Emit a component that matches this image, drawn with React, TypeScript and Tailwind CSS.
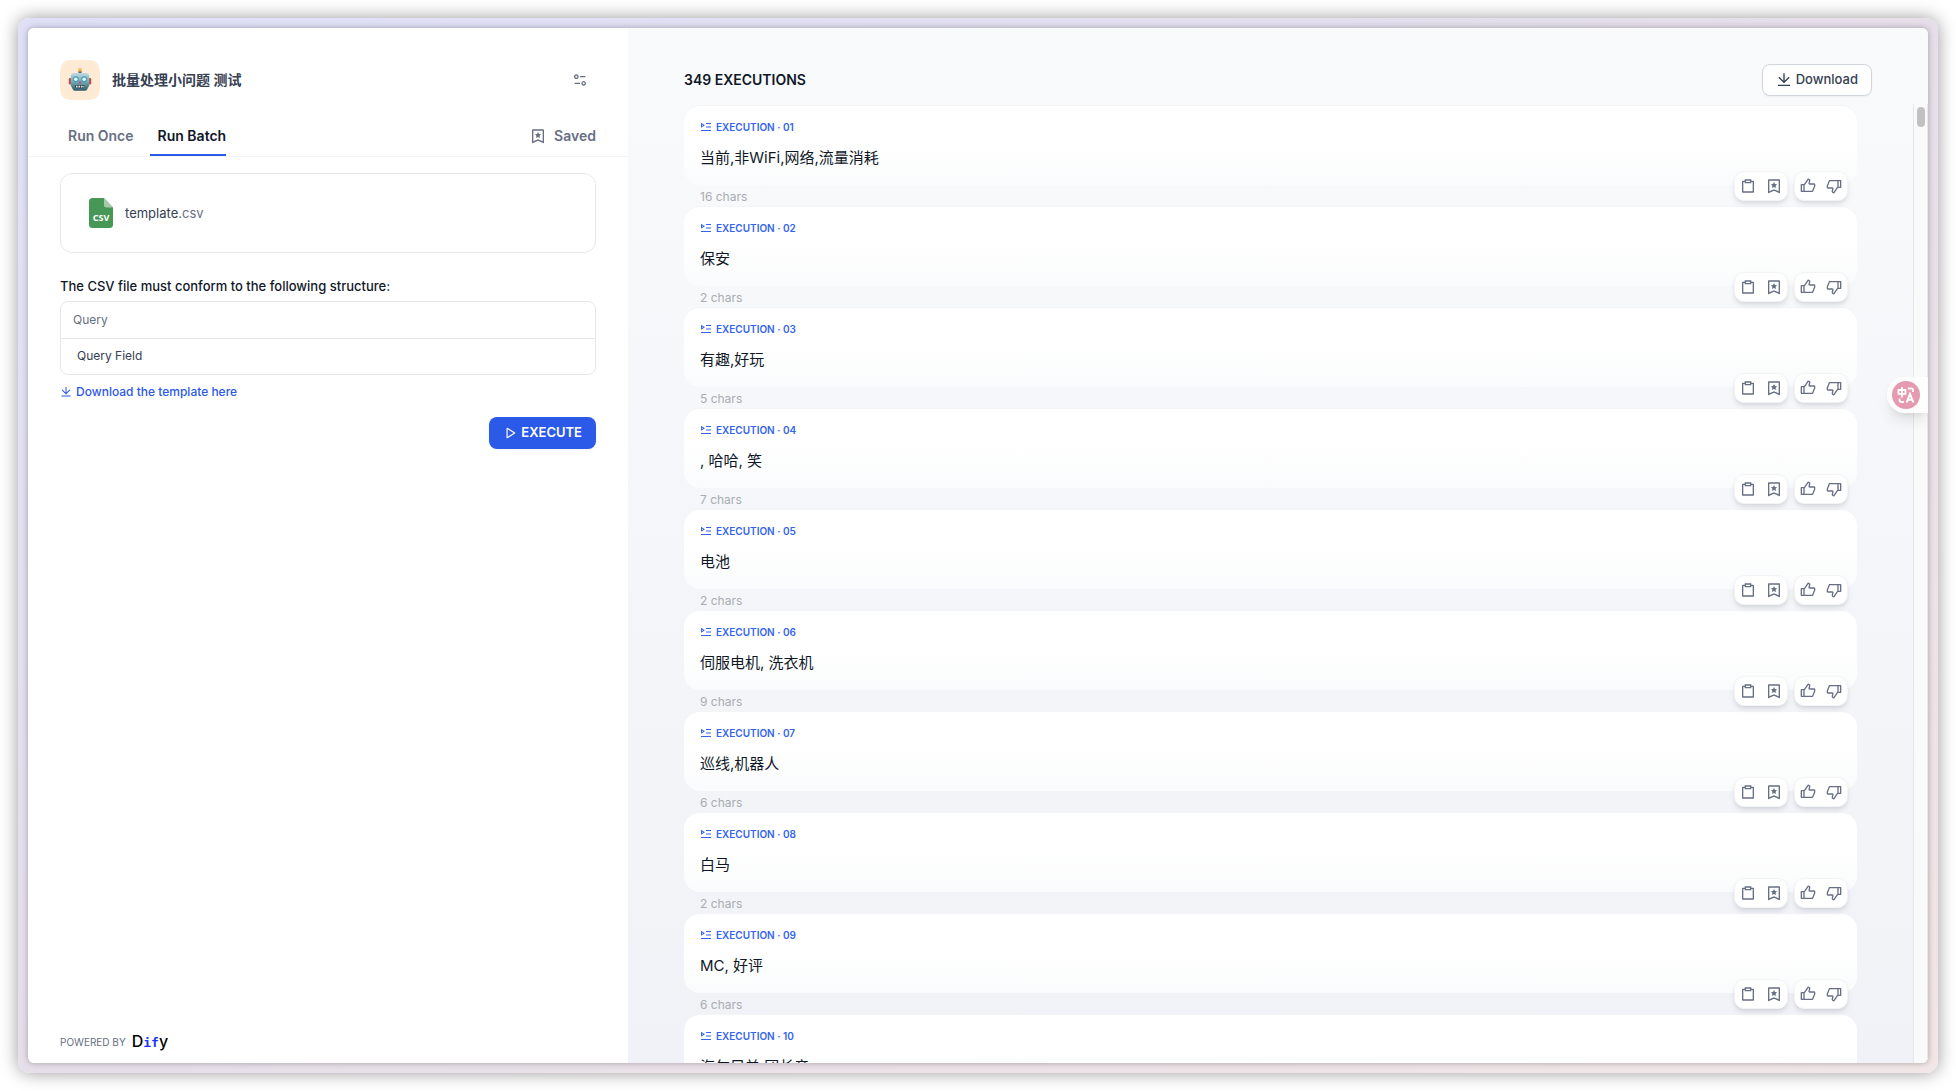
import { useState } from "react";
import {
  RiBookmark3Line,
  RiClipboardLine,
  RiDownloadLine,
  RiEqualizer2Line,
  RiPlayLargeLine,
  RiPlayList2Line,
  RiThumbDownLine,
  RiThumbUpLine,
} from "react-icons/ri";

type Execution = {
  id: string;
  text: string;
  chars: number;
};

const executions: Execution[] = [
  { id: "01", text: "当前,非WiFi,网络,流量消耗", chars: 16 },
  { id: "02", text: "保安", chars: 2 },
  { id: "03", text: "有趣,好玩", chars: 5 },
  { id: "04", text: ", 哈哈, 笑", chars: 7 },
  { id: "05", text: "电池", chars: 2 },
  { id: "06", text: "伺服电机, 洗衣机", chars: 9 },
  { id: "07", text: "巡线,机器人", chars: 6 },
  { id: "08", text: "白马", chars: 2 },
  { id: "09", text: "MC, 好评", chars: 6 },
  { id: "10", text: "海尔兄弟,团长音", chars: 8 },
];

const RobotIcon = () => (
  <svg width="24" height="24" viewBox="0 0 24 24" aria-hidden="true">
    <defs>
      <linearGradient id="robot" x1="0" y1="0" x2="0" y2="1">
        <stop offset="0" stopColor="#c3dbe0" />
        <stop offset="0.5" stopColor="#75a9b8" />
        <stop offset="1" stopColor="#2c5b6b" />
      </linearGradient>
    </defs>
    <rect x="10.4" y="3" width="3.2" height="3.4" fill="#6a5a86" />
    <circle cx="12" cy="2" r="1.8" fill="#f4b443" />
    <rect x="0.8" y="10" width="3" height="6.4" rx="1.2" fill="#c24a45" />
    <rect x="20.2" y="10" width="3" height="6.4" rx="1.2" fill="#c24a45" />
    <path d="M5.5 5h13c1.6 0 2.7 1.2 2.7 2.7v9.8l-2.2 4.2c-.4.7-1 1.1-1.8 1.1H6.8c-.8 0-1.4-.4-1.800-1.1L2.8 17.5V7.7C2.8 6.2 3.9 5 5.500 5z" fill="url(#robot)" />
    <circle cx="7.8" cy="11.2" r="3" fill="#3f9dbd" />
    <circle cx="16.2" cy="11.2" r="3" fill="#3f9dbd" />
    <circle cx="7.8" cy="11.2" r="1.8" fill="#e9fbff" />
    <circle cx="16.2" cy="11.2" r="1.8" fill="#e9fbff" />
    <path d="M12 12.5l1.6 2.8h-3.2z" fill="#d8483f" />
    <rect x="6.8" y="17" width="10.4" height="3.2" rx="1.4" fill="#3b4a55" />
    <path d="M8 18.6h1.5m1 0H12m1 0h1.5m1 0h.8" stroke="#e4ecee" strokeWidth="1.6" />
  </svg>
);

const CsvIcon = () => (
  <svg width="24" height="30" viewBox="0 0 24 30" aria-hidden="true">
    <path d="M3.5 0H15l9 9.5v17a3.5 3.5 0 0 1-3.5 3.5h-17A3.5 3.5 0 0 1 0 26.5v-23A3.5 3.5 0 0 1 3.5 0z" fill="#479757" />
    <path d="M15 0l9 9.5h-6.5A2.5 2.5 0 0 1 15 7z" fill="#a5cbac" />
    <text x="12" y="23" textAnchor="middle" fontSize="9" fontWeight="700" fontFamily="'Noto Sans', sans-serif" fill="#fff">
      CSV
    </text>
  </svg>
);

const TranslateIcon = () => (
  <svg width="28" height="28" viewBox="0 0 28 28" fill="none" stroke="#fff" strokeWidth="1.8" aria-hidden="true">
    <circle cx="14" cy="14" r="14" fill="#e59ab1" stroke="none" />
    <path d="M6.5 9h7v3.8h-7zM10 6v10.5" />
    <path d="M16 7.5h3.5A1.5 1.5 0 0 1 21 9v2M7.5 17.5V19a2 2 0 0 0 2 2H12" />
    <path d="M14.600 21.5l3.4-8.5 3.4 8.5M15.800 18.8h4.4" strokeWidth="2" />
  </svg>
);

const actionBox =
  "flex gap-0.5 rounded-[10px] border border-gray-100 bg-white px-px py-px shadow-md shadow-gray-900/10";
const actionButton = "flex h-[26px] w-6 items-center justify-center text-[#676f83]";

const ExecutionCard = ({ item }: { item: Execution }) => {
  return (
    <article className="shrink-0">
      <div className="h-20 rounded-2xl border-t border-gray-100 bg-linear-to-b from-white from-45% to-[#fafbfc] px-4 pt-[13px]">
        <p className="flex items-center gap-1 text-[10px] leading-4 font-semibold text-[#3464ee]">
          <RiPlayList2Line size={12} />
          EXECUTION · {item.id}
        </p>
        <p className="mt-[11px] text-[15px] leading-6 text-[#101828]">{item.text}</p>
      </div>
      <div className="relative flex h-[21px] items-center px-4 pt-[3px] text-xs leading-4 text-[#a9acb3]">
        {item.chars} chars
        <div className="absolute right-[9px] bottom-[5px] flex gap-1.5">
          <div className={actionBox}>
            <button className={actionButton} aria-label="Copy">
              <RiClipboardLine size={16} />
            </button>
            <button className={actionButton} aria-label="Save">
              <RiBookmark3Line size={16} />
            </button>
          </div>
          <div className={actionBox}>
            <button className={actionButton} aria-label="Like">
              <RiThumbUpLine size={16} />
            </button>
            <button className={actionButton} aria-label="Dislike">
              <RiThumbDownLine size={16} />
            </button>
          </div>
        </div>
      </div>
    </article>
  );
};

const Sidebar = () => {
  const [tab, setTab] = useState("batch");

  const tabClass = (name: string) =>
    tab === name
      ? "border-[#2b59e8] text-[#101828]"
      : "border-transparent text-[#676f83]";

  return (
    <aside className="flex w-[600px] shrink-0 flex-col bg-white">
      <header className="flex items-center gap-3 px-8 pt-8">
        <div className="flex size-10 items-center justify-center rounded-[10px] bg-[#ffead5]">
          <RobotIcon />
        </div>
        <h1 className="flex-1 text-sm font-semibold text-[#354052]">批量处理小问题 测试</h1>
        <button className="flex size-8 items-center justify-center text-[#676f83]" aria-label="Settings">
          <RiEqualizer2Line size={16} />
        </button>
      </header>

      <nav className="mt-4 flex items-stretch justify-between border-b border-gray-100 px-8 text-sm font-semibold">
        <div className="flex gap-4">
          <button className={`h-10 border-b-2 pt-0.5 pl-2 ${tabClass("once")}`} onClick={() => setTab("once")}>
            Run Once
          </button>
          <button className={`h-10 border-b-2 pt-0.5 pl-2 ${tabClass("batch")}`} onClick={() => setTab("batch")}>
            Run Batch
          </button>
        </div>
        <button className="flex h-10 items-center gap-2 text-[#676f83]">
          <RiBookmark3Line size={16} />
          Saved
        </button>
      </nav>

      <main className="flex-1 px-8 pt-4">
        <div className="flex h-20 items-center gap-3 rounded-xl border border-gray-200 px-7">
          <CsvIcon />
          <p className="pt-0.5 text-[13px] text-[#354052]">
            template<span className="text-[#676f83]">.csv</span>
          </p>
        </div>

        <h2 className="mt-6 text-[13px] leading-[18px] font-medium text-[#101828]">
          The CSV file must conform to the following structure:
        </h2>
        <div className="mt-1.5 rounded-lg border border-gray-200">
          <table className="w-full text-left text-xs leading-5">
            <thead>
              <tr className="border-b border-gray-200">
                <th className="h-9 pl-3 font-normal text-[#676f83]">Query</th>
              </tr>
            </thead>
            <tbody>
              <tr>
                <td className="h-9 pl-4 text-[#354052]">Query Field</td>
              </tr>
            </tbody>
          </table>
        </div>
        <a href="#template" className="mt-2 flex items-center gap-1 text-xs leading-[18px] font-medium text-[#2b59e8]">
          <RiDownloadLine size={12} />
          Download the template here
        </a>

        <div className="mt-4 flex justify-end">
          <button className="flex h-8 items-center gap-1 rounded-lg bg-[#2b59e8] px-3.5 text-[13px] font-semibold text-white shadow-xs">
            <RiPlayLargeLine size={14} />
            EXECUTE
          </button>
        </div>
      </main>

      <footer className="flex items-center gap-1.5 px-8 pb-2 text-[10px] text-[#676f83]">
        POWERED BY
        <span className="text-base leading-6 font-medium text-black">
          D
          <span className="font-['DejaVu_Sans_Mono',monospace] text-[13px] font-bold text-[#1a35ff]">if</span>
          y
        </span>
      </footer>
    </aside>
  );
};

const App = () => {
  return (
    <div className="h-screen bg-white p-[18px] font-[Inter,'Noto_Sans_CJK_SC',sans-serif]">
      <div className="h-full rounded-xl bg-linear-to-br from-[#dfe0f8] via-[#e6dfea] to-[#f2e6e6] p-2.5 shadow-[0_0_18px_rgba(0,0,0,0.4)]">
        <div className="relative flex h-full overflow-hidden rounded-md shadow-[0_0_6px_rgba(0,0,0,0.3)]">
          <Sidebar />

          <section className="flex min-w-0 flex-1 flex-col bg-linear-to-b from-[#f9fafb] to-[#f0f2f7]">
            <header className="flex items-center justify-between px-14 pt-9 pb-2">
              <h2 className="text-sm font-semibold text-[#101828]">349 EXECUTIONS</h2>
              <button className="flex h-8 items-center gap-1 rounded-lg border border-gray-300 bg-white px-[13px] text-[13px] font-medium text-[#354052] shadow-xs">
                <RiDownloadLine size={16} />
                Download
              </button>
            </header>

            <div className="flex min-h-0 flex-1">
              <div className="flex min-w-0 flex-1 flex-col overflow-hidden px-14 pt-px">
                {executions.map((item) => (
                  <ExecutionCard key={item.id} item={item} />
                ))}
              </div>
              <div className="w-[15px] border-x border-gray-200 bg-[#fafafa] pt-[3px] pl-[3px]">
                <div className="h-5 w-2 rounded-full bg-[#c1c1c1]" />
              </div>
            </div>
          </section>

          <button
            className="absolute top-[349px] right-0 flex h-9 items-center rounded-l-full bg-white/80 pr-2 pl-[5px] shadow-lg"
            aria-label="Translate"
          >
            <TranslateIcon />
          </button>
        </div>
      </div>
    </div>
  );
};

export default App;
